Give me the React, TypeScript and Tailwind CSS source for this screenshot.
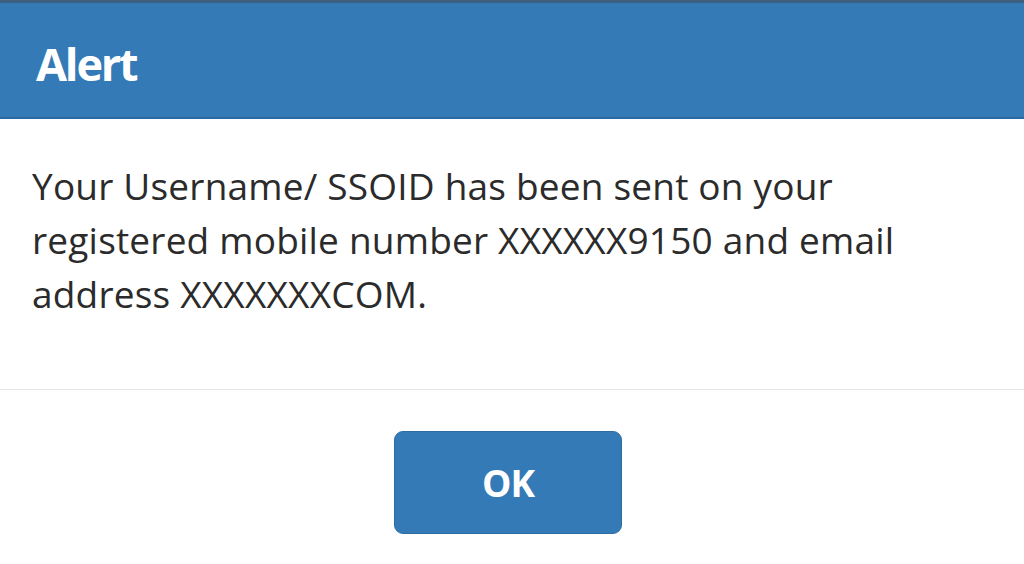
export default function App() {
  return (
    <div
      className="w-[1024px] h-[564px] overflow-hidden bg-white flex flex-col"
      style={{ fontFamily: "'Open Sans', Lato, sans-serif" }}
    >
      {/* Header */}
      <div className="h-[119px] shrink-0 bg-[#337ab7] border-t-[3px] border-t-[#3d5f80] border-b-2 border-b-[#2c6aa3] flex items-center px-[36px]">
        <h1 className="text-[45px] font-bold text-white tracking-[-2.2px] pt-[8px]">Alert</h1>
      </div>

      {/* Body */}
      <div className="h-[271px] shrink-0 border-b border-[#e5e5e5] pl-[32px] pr-[64px] pt-[40px]">
        <p className="text-[37px] leading-[54px] text-[#2b2b2b] tracking-[0.2px]">
          Your Username/ SSOID has been sent on your registered mobile number XXXXXX9150 and email address XXXXXXXCOM.
        </p>
      </div>

      {/* Footer */}
      <div className="flex-1 flex justify-center pt-[41px] pr-[8px]">
        <button className="w-[228px] h-[103px] rounded-[9px] bg-[#337ab7] border border-[#2e6da4] text-white text-[37px] font-bold tracking-[-1px]">
          OK
        </button>
      </div>
    </div>
  );
}
